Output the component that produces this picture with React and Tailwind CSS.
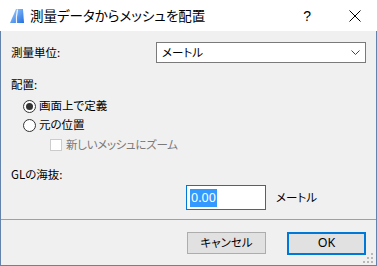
import React from 'react';

const font = "font-['Noto_Sans_CJK_JP','Noto_Sans',sans-serif] [font-feature-settings:'palt']";

function AppIcon() {
  return (
    <svg width="16" height="16" viewBox="0 0 16 16">
      <defs>
        <linearGradient id="sail" x1="0" y1="0" x2="1" y2="1">
          <stop offset="0" stopColor="#a9d2ff" />
          <stop offset="1" stopColor="#1f6fe0" />
        </linearGradient>
      </defs>
      <polygon points="1,15 7,1 14,1 15,15" fill="url(#sail)" />
      <path d="M8.5 1.5 C 7.5 6, 7 10, 7.5 15" stroke="#ffffff" strokeWidth="1.2" fill="none" opacity="0.9" />
    </svg>
  );
}

function Radio({ checked, label }) {
  return (
    <div className="flex items-center h-[16px] pl-[12px]">
      <span className="w-[13px] h-[13px] rounded-full border border-[#333333] bg-white flex items-center justify-center">
        {checked && <span className="w-[7px] h-[7px] rounded-full bg-[#333333]" />}
      </span>
      <span className="ml-[3px] text-[11.5px] leading-none text-black">{label}</span>
    </div>
  );
}

export default function App() {
  return (
    <div className={`w-[377px] h-[266px] ${font} select-none`}>
      {/* Title bar */}
      <div className="h-[31px] bg-white flex items-center">
        <div className="ml-[9px] mt-[1px]">
          <AppIcon />
        </div>
        <span className="ml-[5px] text-[13.5px] text-black leading-none">測量データからメッシュを配置</span>
        <span className="ml-auto text-[14px] leading-none text-black font-['Liberation_Sans',sans-serif]">?</span>
        <svg className="ml-[38px] mr-[16px]" width="12" height="12" viewBox="0 0 12 12">
          <path d="M0.5 0.5 L11.5 11.5 M11.5 0.5 L0.5 11.5" stroke="#000" strokeWidth="1" />
        </svg>
      </div>

      {/* Body */}
      <div className="relative h-[235px] bg-[#f0f0f0] border-x border-b border-[#6383ab] flex flex-col">
        <div className="flex flex-col pl-[10px]">
          <div className="mt-[11px] h-[21px] flex items-center">
            <span className="w-[145px] text-[11.5px] leading-none text-black">測量単位:</span>
            <div className="w-[210px] h-[21px] bg-white border border-[#7a7a7a] flex items-center pl-[5px] pr-[5px]">
              <span className="text-[11.5px] leading-none text-black">メートル</span>
              <svg className="ml-auto" width="9" height="5" viewBox="0 0 9 5">
                <path d="M0.5 0.5 L4.5 4.5 L8.5 0.5" stroke="#444" strokeWidth="1" fill="none" />
              </svg>
            </div>
          </div>

          <div className="mt-[14px] h-[16px] flex items-center text-[11.5px] leading-none text-black">配置:</div>

          <div className="mt-[5px]">
            <Radio checked label="画面上で定義" />
          </div>
          <div className="mt-[3px]">
            <Radio label="元の位置" />
          </div>

          <div className="mt-[4px] h-[16px] flex items-center pl-[39px]">
            <span className="w-[12px] h-[12px] border border-[#cccccc] bg-white" />
            <span className="ml-[4px] text-[11.5px] leading-none text-[#7a7a7a] tracking-[-0.3px]">新しいメッシュにズーム</span>
          </div>

          <div className="mt-[14px] h-[16px] flex items-center text-[11.5px] leading-none text-black">GLの海抜:</div>

          <div className="mt-[2px] flex items-center">
            <div className="ml-[175px] w-[80px] h-[25px] bg-white border border-[#0078d7] flex items-center pl-[3px]">
              <span className="bg-[#3399ff] text-white text-[12.5px] leading-[18px] px-[1px] font-['Noto_Sans',sans-serif]">0.00</span>
            </div>
            <span className="ml-[10px] text-[11.5px] leading-none text-black">メートル</span>
          </div>
        </div>

        <div className="mt-[9px] h-[1px] bg-[#a0a0a0]" />

        <div className="mt-[12px] flex justify-end pr-[10px] gap-[21px]">
          <div className="w-[79px] h-[22px] bg-[#e1e1e1] border border-[#adadad] flex items-center justify-center text-[11.5px] leading-none text-black">
            キャンセル
          </div>
          <div className="w-[79px] h-[23px] bg-[#e1e1e1] border-2 border-[#0078d7] flex items-center justify-center text-[12.5px] leading-none text-black font-['Noto_Sans',sans-serif]">
            OK
          </div>
        </div>

        {/* resize grip */}
        <svg className="absolute right-[2px] bottom-[1px]" width="11" height="11" viewBox="0 0 11 11">
          <rect x="8" y="0" width="2" height="2" fill="#b8b8b8" />
          <rect x="4" y="4" width="2" height="2" fill="#b8b8b8" />
          <rect x="8" y="4" width="2" height="2" fill="#b8b8b8" />
          <rect x="0" y="8" width="2" height="2" fill="#b8b8b8" />
          <rect x="4" y="8" width="2" height="2" fill="#b8b8b8" />
          <rect x="8" y="8" width="2" height="2" fill="#b8b8b8" />
        </svg>
      </div>
    </div>
  );
}
